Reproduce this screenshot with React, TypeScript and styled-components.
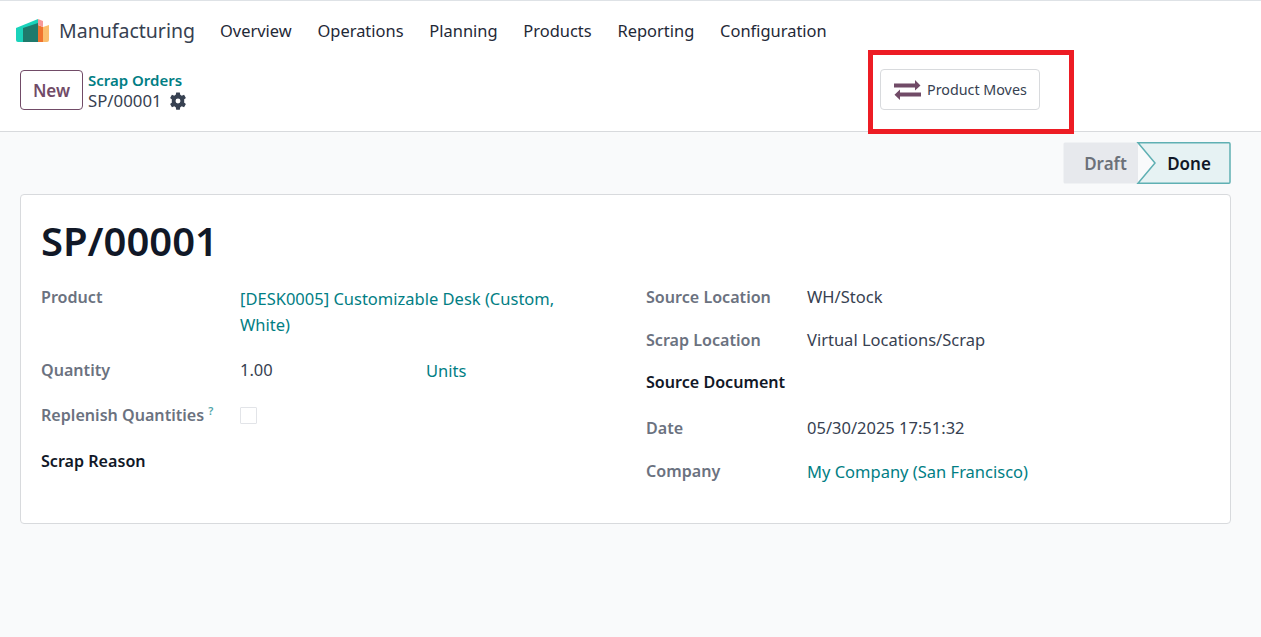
import React from "react";
import styled, { createGlobalStyle } from "styled-components";

const Global = createGlobalStyle`
  html, body { margin: 0; padding: 0; height: 100%; background: #f9fafb; }
  body { font-family: "Noto Sans", "Open Sans", sans-serif; color: #111827; }
  #root { height: 100%; }
`;

const Page = styled.div`
  position: relative;
  width: 1261px;
  height: 637px;
  overflow: hidden;
  background: #f9fafb;
`;

const Header = styled.div`
  background: #fff;
  border-top: 1px solid #dee2e6;
  border-bottom: 1px solid #d8dadd;
  height: 130px;
  box-sizing: content-box;
`;

const Nav = styled.nav`
  display: flex;
  align-items: center;
  height: 59px;
  padding-left: 16px;
`;

const LogoWrap = styled.svg`
  width: 34px;
  height: 23px;
  margin-right: 9px;
  flex: none;
`;

const AppName = styled.div`
  font-size: 19.5px;
  color: #374151;
  margin-right: 25px;
`;

const NavItem = styled.a`
  font-size: 16.45px;
  color: #1f2937;
  margin-right: 25.8px;
`;

const ControlPanel = styled.div`
  display: flex;
  align-items: flex-start;
  padding: 9px 0 0 20px;
`;

const Left = styled.div`
  display: flex;
  width: 860px;
  flex: none;
  gap: 5px;
  padding-top: 1px;
`;

const NewButton = styled.button`
  width: 63px;
  height: 40px;
  box-sizing: border-box;
  background: #fff;
  border: 1px solid #714b67;
  border-radius: 4px;
  color: #714b67;
  font: 600 17px "Noto Sans", sans-serif;
  padding: 0;
`;

const Crumbs = styled.div`
  display: flex;
  flex-direction: column;
`;

const CrumbLink = styled.a`
  font-size: 15px;
  font-weight: 600;
  color: #017e84;
  line-height: 20px;
`;

const CrumbCurrent = styled.div`
  display: flex;
  align-items: center;
  gap: 7px;
  font-size: 16.8px;
  color: #374151;
  line-height: 22px;
`;

const MovesButton = styled.button`
  display: flex;
  align-items: center;
  gap: 6px;
  width: 160px;
  height: 41px;
  box-sizing: border-box;
  padding: 0 0 0 13px;
  background: #fff;
  border: 1px solid #d8dadd;
  border-radius: 4px;
  color: #374151;
  font: 400 14.3px "Noto Sans", sans-serif;
`;

const StatusRow = styled.div`
  display: flex;
  justify-content: flex-end;
  height: 41px;
  margin: 10px 30px 0 0;
`;

const StatusBar = styled.div`
  position: relative;
  display: flex;
  width: 168px;
  height: 42px;
`;

const StatusShape = styled.svg`
  position: absolute;
  inset: 0;
  width: 168px;
  height: 42px;
`;

const StatusLabel = styled.div<{ $active?: boolean }>`
  position: relative;
  display: flex;
  align-items: center;
  justify-content: center;
  font-size: 17px;
  font-weight: 600;
  color: ${(p) => (p.$active ? "#111827" : "#6c7179")};
  width: ${(p) => (p.$active ? "82px" : "85px")};
`;

const Sheet = styled.section`
  box-sizing: border-box;
  width: 1211px;
  height: 330px;
  margin: 11px 0 0 20px;
  padding: 16px 20px 0 20px;
  background: #fff;
  border: 1px solid #d8dadd;
  border-radius: 4px;
`;

const Title = styled.h1`
  margin: 0;
  font-size: 40px;
  font-weight: 600;
  line-height: 60px;
  color: #111827;
`;

const Columns = styled.div`
  display: grid;
  grid-template-columns: 605px 1fr;
  margin-top: 13px;
`;

const Column = styled.div`
  display: flex;
  flex-direction: column;
`;

const Row = styled.div<{ $h: number; $w: number }>`
  display: grid;
  grid-template-columns: ${(p) => p.$w}px 1fr;
  min-height: ${(p) => p.$h}px;
  font-size: 16.5px;
  line-height: 26px;
`;

const Label = styled.div<{ $dark?: boolean }>`
  font-weight: 600;
  font-size: 16.1px;
  color: ${(p) => (p.$dark ? "#111827" : "#6b7280")};
`;

const Value = styled.div`
  color: #374151;
`;

const LinkValue = styled.a<{ $top?: number }>`
  color: #017e84;
  display: block;
  max-width: 330px;
  margin-top: ${(p) => p.$top ?? 1}px;
`;

const QtyRow = styled.div`
  display: flex;
`;

const Qty = styled.div`
  width: 186px;
  color: #374151;
`;

const Sup = styled.sup`
  color: #017e84;
  font-size: 11px;
  font-weight: 600;
  margin-left: 4px;
  line-height: 0;
  opacity: 0.7;
`;

const Check = styled.div`
  width: 17px;
  height: 17px;
  box-sizing: border-box;
  margin-top: 5px;
  background: #fff;
  border: 1px solid #e2e4e8;
  border-radius: 1px;
`;

const Annotation = styled.div`
  position: absolute;
  left: 868px;
  top: 50px;
  width: 206px;
  height: 84px;
  box-sizing: border-box;
  border: 5px solid #ed1c24;
  pointer-events: none;
`;

const navItems = ["Overview", "Operations", "Planning", "Products", "Reporting", "Configuration"];

const Logo = () => (
  <LogoWrap viewBox="0 0 34 23">
    <path d="M0 9 L22 0 V23 H2 Q0 23 0 21 Z" fill="#1ad3bb" />
    <path d="M7 9 L22 4 V23 H7 Z" fill="#1f7a6c" />
    <path d="M22 6 L27 8 V23 H22 Z" fill="#f0742e" />
    <path d="M22 0 L27 2 V8 L22 6 Z" fill="#f79a9a" />
    <path d="M27 8 L33 6 V21 Q33 23 31 23 H27 Z" fill="#fbbf6e" />
  </LogoWrap>
);

const Gear = () => (
  <svg width="18" height="18" viewBox="0 0 24 24" fill="#374151">
    <path
      fillRule="evenodd"
      d="M14.4 0.500h-4.800l-.6 3.200a8.500 8.500 0 0 0-2 1.200L3.900 3.800 1.500 8l2.400 2a8.500 8.500 0 0 0 0 4l-2.400 2 2.400 4.200 3.100-1.100a8.500 8.500 0 0 0 2 1.200l.6 3.200h4.800l.6-3.200a8.500 8.500 0 0 0 2-1.200l3.100 1.100 2.400-4.200-2.400-2a8.500 8.500 0 0 0 0-4l2.400-2-2.400-4.200-3.100 1.100a8.500 8.500 0 0 0-2-1.200zM12 8.700a3.300 3.300 0 1 1 0 6.600 3.300 3.300 0 0 1 0-6.600z"
    />
  </svg>
);

const Arrows = () => (
  <svg width="27" height="20" viewBox="0 0 27 20" fill="#714b67" style={{ flex: "none" }}>
    <path d="M0 3.500h21V0l5.500 5.500L21 10.500V7.500H0z" />
    <path d="M27 12.500H6V9.500L0.500 14.700 6 20v-3.500h21z" />
  </svg>
);

export default function App() {
  return (
    <Page>
      <Global />
      <Header>
        <Nav>
          <Logo />
          <AppName>Manufacturing</AppName>
          {navItems.map((n) => (
            <NavItem key={n}>{n}</NavItem>
          ))}
        </Nav>
        <ControlPanel>
          <Left>
            <NewButton>New</NewButton>
            <Crumbs>
              <CrumbLink>Scrap Orders</CrumbLink>
              <CrumbCurrent>
                SP/00001 <Gear />
              </CrumbCurrent>
            </Crumbs>
          </Left>
          <MovesButton>
            <Arrows />
            Product Moves
          </MovesButton>
        </ControlPanel>
      </Header>
      <StatusRow>
        <StatusBar>
          <StatusShape viewBox="0 0 168 42">
            <path d="M2 0.500 H75 L75 41.500 H2 Q0.500 41.500 0.500 40 V2 Q0.500 0.500 2 0.500Z" fill="#e7e9ed" />
            <path d="M75 0.750 L92 21 L75 41.250 H166 Q167 41.250 167 40 V2 Q167 .750 166 .750Z" fill="#e6f2f3" stroke="#5fb0b3" strokeWidth="1.500" />
          </StatusShape>
          <StatusLabel>Draft</StatusLabel>
          <StatusLabel $active>Done</StatusLabel>
        </StatusBar>
      </StatusRow>
      <Sheet>
        <Title>SP/00001</Title>
        <Columns>
          <Column>
            <Row $w={199} $h={73}>
              <Label>Product</Label>
              <LinkValue $top={2}>[DESK0005] Customizable Desk (Custom, White)</LinkValue>
            </Row>
            <Row $w={199} $h={45}>
              <Label>Quantity</Label>
              <QtyRow>
                <Qty>1.00</Qty>
                <LinkValue>Units</LinkValue>
              </QtyRow>
            </Row>
            <Row $w={199} $h={46}>
              <Label>
                Replenish Quantities<Sup>?</Sup>
              </Label>
              <Check />
            </Row>
            <Row $w={199} $h={40}>
              <Label $dark>Scrap Reason</Label>
              <Value />
            </Row>
          </Column>
          <Column>
            <Row $w={161} $h={43}>
              <Label>Source Location</Label>
              <Value>WH/Stock</Value>
            </Row>
            <Row $w={161} $h={42}>
              <Label>Scrap Location</Label>
              <Value>Virtual Locations/Scrap</Value>
            </Row>
            <Row $w={161} $h={46}>
              <Label $dark>Source Document</Label>
              <Value />
            </Row>
            <Row $w={161} $h={43}>
              <Label>Date</Label>
              <Value>05/30/2025 17:51:32</Value>
            </Row>
            <Row $w={161} $h={40}>
              <Label>Company</Label>
              <LinkValue>My Company (San Francisco)</LinkValue>
            </Row>
          </Column>
        </Columns>
      </Sheet>
      <Annotation />
    </Page>
  );
}
